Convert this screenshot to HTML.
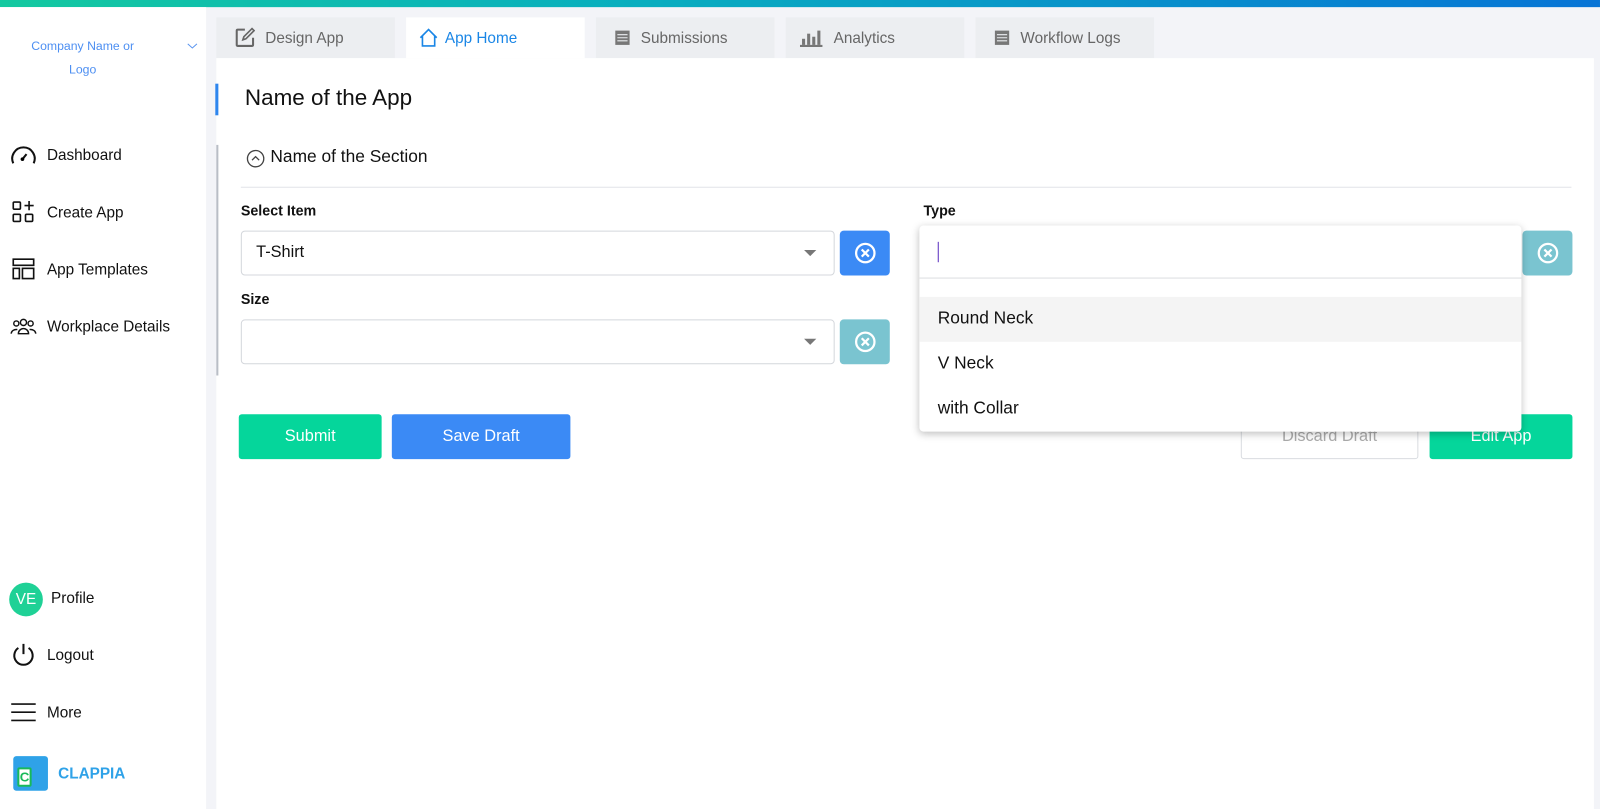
<!DOCTYPE html>
<html><head><meta charset="utf-8"><style>
*{box-sizing:border-box;margin:0;padding:0}
html,body{width:1600px;height:809px;overflow:hidden;background:#f3f4f8}
#w{position:absolute;left:0;top:0;width:1568px;height:793px;transform:scale(1.0204);transform-origin:0 0;font-family:"Liberation Sans",sans-serif;color:#111}
.top{position:absolute;left:0;top:0;width:1568px;height:7px;background:linear-gradient(90deg,#14c9a0,#08aebf 40%,#0774d6)}
.side{position:absolute;left:0;top:7px;width:202px;height:786px;background:#fff}
.abs{position:absolute}
.nav{position:absolute;left:10px;display:flex;align-items:center;font-size:15px;color:#111}
.nav svg{margin-right:10px}
.tab{position:absolute;top:17px;height:40px;background:#eceef1;font-size:15px;color:#666;display:flex;align-items:center;padding-left:18px}
.tab svg{margin-right:10px}
.main{position:absolute;left:212px;top:57px;width:1350px;height:736px;background:#fff}
.lbl{position:absolute;font-size:14px;font-weight:bold;color:#111}
.sel{position:absolute;height:44px;border:1px solid #d4d7dc;border-radius:4px;background:#fff;font-size:16px;display:flex;align-items:center;padding-left:14px}
.arrow{position:absolute;right:17px;top:18px;width:0;height:0;border-left:6px solid transparent;border-right:6px solid transparent;border-top:6px solid #777}
.xb{position:absolute;width:49px;height:44px;border-radius:4px;display:flex;align-items:center;justify-content:center}
.btn{position:absolute;height:44px;border-radius:3px;color:#fff;font-size:16px;display:flex;align-items:center;justify-content:center}
</style></head><body><div id="w">
<div class="top"></div>
<div class="side"></div>
<div class="abs" style="left:0;top:34px;width:162px;text-align:center;font-size:12px;color:#4d8ff2;line-height:23px">Company Name or<br>Logo</div>
<svg class="abs" style="left:183px;top:41px" width="11" height="8"><path d="M1 2l4.5 4L10 2" stroke="#5b95ef" fill="none" stroke-width="1"/></svg>

<div class="nav" style="top:140px"><svg width="26" height="24" viewBox="0 0 26 24"><path d="M3 20A11 11 0 1 1 23 20" stroke="#111" stroke-width="2" fill="none"/><path d="M12 16l4-5" stroke="#111" stroke-width="2"/><circle cx="12" cy="16" r="1.8"/></svg>Dashboard</div>
<div class="nav" style="top:196px"><svg width="26" height="24" viewBox="0 0 26 24"><rect x="3" y="2" width="7" height="7" rx="1" stroke="#111" stroke-width="1.6" fill="none"/><rect x="3" y="14" width="7" height="7" rx="1" stroke="#111" stroke-width="1.6" fill="none"/><rect x="15" y="14" width="7" height="7" rx="1" stroke="#111" stroke-width="1.6" fill="none"/><path d="M18.5 1v9M14 5.5h9" stroke="#111" stroke-width="1.6"/></svg>Create App</div>
<div class="nav" style="top:252px"><svg width="26" height="24" viewBox="0 0 26 24"><rect x="3" y="2" width="20" height="6" stroke="#111" stroke-width="1.6" fill="none"/><rect x="3" y="11" width="6" height="10" stroke="#111" stroke-width="1.6" fill="none"/><rect x="12" y="11" width="11" height="10" stroke="#111" stroke-width="1.6" fill="none"/></svg>App Templates</div>
<div class="nav" style="top:308px"><svg width="26" height="24" viewBox="0 0 26 24"><circle cx="13" cy="8" r="3" stroke="#111" stroke-width="1.4" fill="none"/><circle cx="6" cy="9" r="2.5" stroke="#111" stroke-width="1.4" fill="none"/><circle cx="20" cy="9" r="2.5" stroke="#111" stroke-width="1.4" fill="none"/><path d="M8 19a5 5 0 0 1 10 0zM1 19a5 4 0 0 1 6-4M25 19a5 4 0 0 0-6-4" stroke="#111" stroke-width="1.4" fill="none"/></svg>Workplace Details</div>

<div class="abs" style="left:9px;top:571px;width:33px;height:33px;border-radius:50%;background:#1fd196;color:#fff;font-size:15px;display:flex;align-items:center;justify-content:center">VE</div>
<div class="abs" style="left:50px;top:578px;font-size:15px">Profile</div>
<div class="nav" style="top:630px"><svg width="26" height="24" viewBox="0 0 26 24"><path d="M8 5A9 9 0 1 0 18 5" stroke="#111" stroke-width="2" fill="none"/><path d="M13 1v10" stroke="#111" stroke-width="2"/></svg>Logout</div>
<div class="nav" style="top:686px"><svg width="26" height="24" viewBox="0 0 26 24"><path d="M1 4h24M1 12h24M1 20h24" stroke="#111" stroke-width="1.6"/></svg>More</div>
<div class="abs" style="left:13px;top:741px;width:34px;height:34px;border-radius:3px;background:#2fa2e8"></div>
<div class="abs" style="left:17px;top:752px;width:14px;height:19px;background:#fff;border:2px solid #18b95a;border-radius:2px;font-size:13px;font-weight:bold;color:#18b95a;line-height:15px;text-align:center">C</div>
<div class="abs" style="left:57px;top:750px;font-size:15px;font-weight:bold;color:#2fa2e8">CLAPPIA</div>

<div class="tab" style="left:212px;width:175px"><svg width="20" height="20" viewBox="0 0 20 20"><path d="M10 2H3a1 1 0 0 0-1 1v14a1 1 0 0 0 1 1h14a1 1 0 0 0 1-1v-7" stroke="#666" stroke-width="2" fill="none"/><path d="M8 12l1-3 8-8 2 2-8 8z" stroke="#666" stroke-width="1.6" fill="none"/></svg>Design App</div>
<div class="tab" style="left:398px;width:175px;background:#fff;color:#1a86e6;padding-left:12px"><svg width="20" height="20" viewBox="0 0 20 20" style="margin-right:6px"><path d="M2 10L10 2l8 8M4 8v10h12V8" stroke="#1a86e6" stroke-width="1.6" fill="none"/></svg>App Home</div>
<div class="tab" style="left:584px;width:175px"><svg width="16" height="16" viewBox="0 0 16 16"><rect x="1" y="1" width="14" height="14" fill="#777"/><path d="M3 5h10M3 8h10M3 11h10" stroke="#eceef1" stroke-width="1"/></svg>Submissions</div>
<div class="tab" style="left:770px;width:175px;padding-left:13px"><svg width="24" height="18" viewBox="0 0 24 18"><path d="M1 17h22" stroke="#777" stroke-width="2"/><rect x="3" y="10" width="3" height="6" fill="#777"/><rect x="8" y="5" width="3" height="11" fill="#777"/><rect x="13" y="8" width="3" height="8" fill="#777"/><rect x="18" y="2" width="3" height="14" fill="#777"/></svg>Analytics</div>
<div class="tab" style="left:956px;width:175px"><svg width="16" height="16" viewBox="0 0 16 16"><rect x="1" y="1" width="14" height="14" fill="#777"/><path d="M3 5h10M3 8h10M3 11h10" stroke="#eceef1" stroke-width="1"/></svg>Workflow Logs</div>

<div class="main"></div>
<div class="abs" style="left:211px;top:82px;width:3px;height:31px;background:#2e86ee"></div>
<div class="abs" style="left:212px;top:142px;width:2px;height:226px;background:#b9bec6"></div>
<div class="abs" style="left:240px;top:83px;font-size:22px;color:#111">Name of the App</div>
<svg class="abs" style="left:241px;top:146px" width="19" height="19" viewBox="0 0 19 19"><circle cx="9.5" cy="9.5" r="8" stroke="#444" stroke-width="1.3" fill="none"/><path d="M6 11l3.5-3.5L13 11" stroke="#444" stroke-width="1.3" fill="none"/></svg>
<div class="abs" style="left:265px;top:144px;font-size:17px;color:#111">Name of the Section</div>
<div class="abs" style="left:236px;top:183px;width:1304px;height:1px;background:#e2e4e8"></div>

<div class="lbl" style="left:236px;top:198px">Select Item</div>
<div class="sel" style="left:236px;top:226px;width:582px">T-Shirt<div class="arrow"></div></div>
<div class="xb" style="left:823px;top:226px;background:#3b8af5"><svg width="22" height="22" viewBox="0 0 22 22"><circle cx="11" cy="11" r="9" stroke="#fff" stroke-width="2.2" fill="none"/><path d="M7.5 7.5l7 7M14.5 7.5l-7 7" stroke="#fff" stroke-width="2.2"/></svg></div>
<div class="lbl" style="left:236px;top:285px">Size</div>
<div class="sel" style="left:236px;top:313px;width:582px"><div class="arrow"></div></div>
<div class="xb" style="left:823px;top:313px;background:#7ac4d0"><svg width="22" height="22" viewBox="0 0 22 22"><circle cx="11" cy="11" r="9" stroke="#fff" stroke-width="2.2" fill="none"/><path d="M7.5 7.5l7 7M14.5 7.5l-7 7" stroke="#fff" stroke-width="2.2"/></svg></div>

<div class="lbl" style="left:905px;top:198px">Type</div>
<div class="xb" style="left:1492px;top:226px;background:#7ac4d0"><svg width="22" height="22" viewBox="0 0 22 22"><circle cx="11" cy="11" r="9" stroke="#fff" stroke-width="2.2" fill="none"/><path d="M7.5 7.5l7 7M14.5 7.5l-7 7" stroke="#fff" stroke-width="2.2"/></svg></div>

<div class="btn" style="left:234px;top:406px;width:140px;background:#05d69b">Submit</div>
<div class="btn" style="left:384px;top:406px;width:175px;background:#3b8af5">Save Draft</div>
<div class="btn" style="left:1216px;top:406px;width:174px;background:#fff;border:1px solid #d9dce0;color:#aaa">Discard Draft</div>
<div class="btn" style="left:1401px;top:406px;width:140px;background:#05d69b">Edit App</div>

<div class="abs" style="left:901px;top:221px;width:590px;height:202px;background:#fff;border-radius:4px;box-shadow:0 2px 8px rgba(0,0,0,.25)">
<div class="abs" style="left:18px;top:16px;width:1px;height:20px;background:#5a2fc0"></div>
<div class="abs" style="left:0;top:51px;width:590px;height:1px;background:#dcdde0"></div>
<div class="abs" style="left:0;top:70px;width:590px;height:44px;background:#f4f4f4"></div>
<div class="abs" style="left:18px;top:81px;font-size:17px">Round Neck</div>
<div class="abs" style="left:18px;top:125px;font-size:17px">V Neck</div>
<div class="abs" style="left:18px;top:169px;font-size:17px">with Collar</div>
</div>
</div></body></html>
